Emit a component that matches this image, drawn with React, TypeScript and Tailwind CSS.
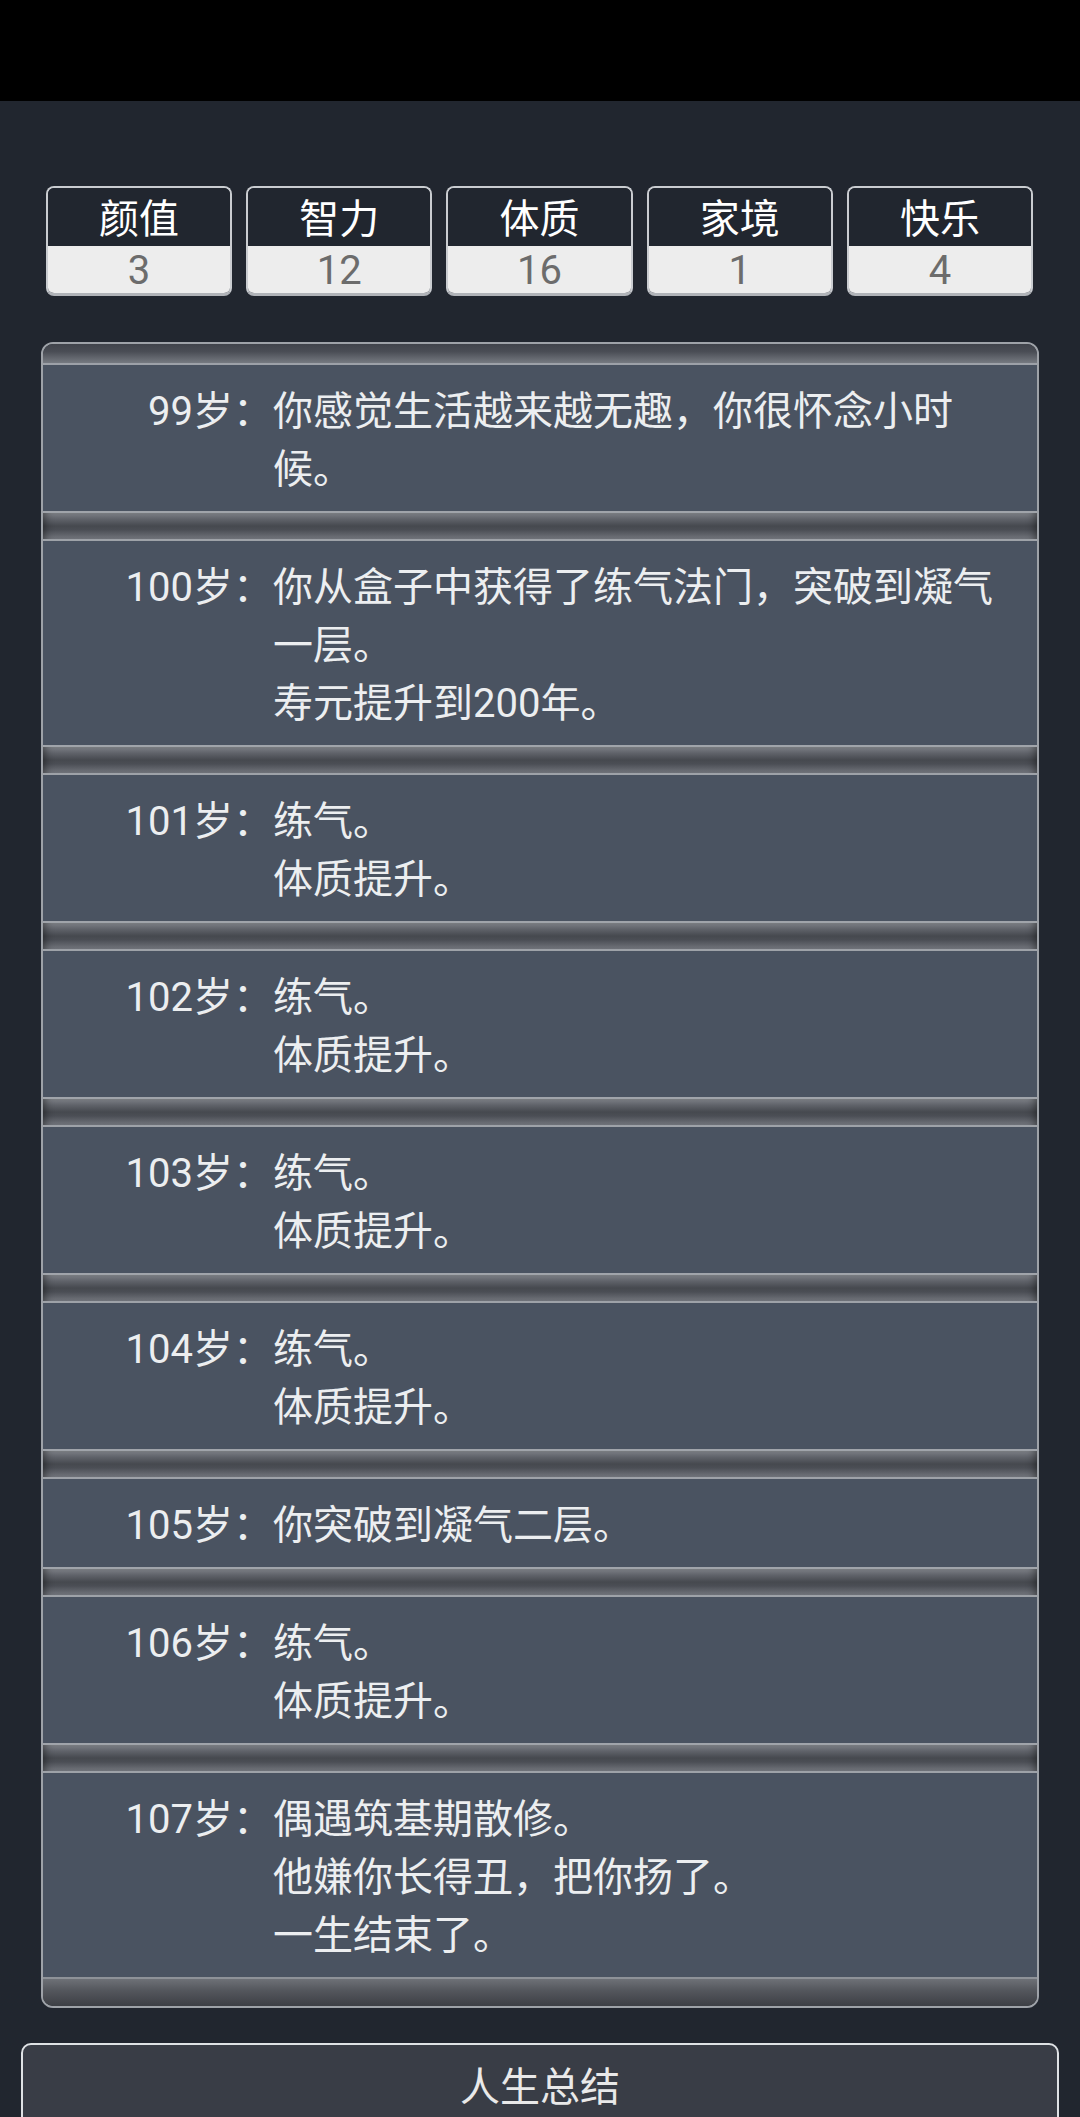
import React from 'react';

type Stat = { name: string; value: number };
type Entry = { age: number; lines: string[] };

const STATS: Stat[] = [
  { name: '颜值', value: 3 },
  { name: '智力', value: 12 },
  { name: '体质', value: 16 },
  { name: '家境', value: 1 },
  { name: '快乐', value: 4 },
];

const ENTRIES: Entry[] = [
  { age: 99, lines: ['你感觉生活越来越无趣，你很怀念小时候。'] },
  { age: 100, lines: ['你从盒子中获得了练气法门，突破到凝气一层。', '寿元提升到200年。'] },
  { age: 101, lines: ['练气。', '体质提升。'] },
  { age: 102, lines: ['练气。', '体质提升。'] },
  { age: 103, lines: ['练气。', '体质提升。'] },
  { age: 104, lines: ['练气。', '体质提升。'] },
  { age: 105, lines: ['你突破到凝气二层。'] },
  { age: 106, lines: ['练气。', '体质提升。'] },
  { age: 107, lines: ['偶遇筑基期散修。', '他嫌你长得丑，把你扬了。', '一生结束了。'] },
];

// groove between two entries
const Separator = () => (
  <div className="h-[30px] border-y-2 border-t-[#a0a4aa] border-b-[#9ea2a8] bg-[linear-gradient(to_bottom,#7c7f85_0%,#5e6168_25%,#46494f_50%,#4b4e55_65%,#72757c_100%)] shadow-[inset_10px_0_8px_-8px_rgba(0,0,0,0.45),inset_-10px_0_8px_-8px_rgba(0,0,0,0.45)]" />
);

const StatBox = ({ stat }: { stat: Stat }) => (
  <div className="flex flex-col overflow-hidden rounded-[8px] border-x-2 border-t-2 border-b-[3px] border-[#c9ccd0] border-b-[#b0b3b8]">
    <div className="flex h-[58px] items-center justify-center bg-[#21262f] pt-[5px] text-[40px] leading-none text-white">
      {stat.name}
    </div>
    <div className="flex h-[47px] items-center justify-center bg-[#ededed] pt-[2px] text-[40px] leading-none text-[#6c6c6c]">
      {stat.value}
    </div>
  </div>
);

const EntryRow = ({ entry }: { entry: Entry }) => (
  <div className="flex bg-[#4a5361] pt-[18px] pb-[12px] pr-[30px] text-[40px] leading-[58px] text-[#eceef0]">
    <div className="w-[230px] shrink-0 text-right">{entry.age}岁：</div>
    <div className="flex-1">
      {entry.lines.map((l, i) => (
        <div key={i}>{l}</div>
      ))}
    </div>
  </div>
);

export default function App() {
  return (
    <div
      className="h-[2117px] w-[1080px] overflow-hidden bg-[#21262f]"
      style={{ fontFamily: "Roboto, 'Noto Sans CJK SC', sans-serif" }}
    >
      {/* status bar */}
      <div className="h-[101px] bg-black" />

      {/* attributes */}
      <div className="mt-[85px] grid grid-cols-5 gap-[14px] pl-[46px] pr-[47px]">
        {STATS.map((s) => (
          <StatBox key={s.name} stat={s} />
        ))}
      </div>

      {/* life log */}
      <div className="mx-[41px] mt-[46px] h-[1666px] w-[998px] overflow-hidden rounded-[12px] border-2 border-[#9ea2a8]">
        <div className="h-[21px] border-b-2 border-[#9da1a8] bg-[linear-gradient(to_bottom,#40434b_0%,#4a4d55_40%,#767a81_100%)]" />
        {ENTRIES.map((e, i) => (
          <React.Fragment key={e.age}>
            {i > 0 && <Separator />}
            <EntryRow entry={e} />
          </React.Fragment>
        ))}
        <div className="h-[29px] border-t-2 border-[#8e9298] bg-[linear-gradient(to_bottom,#6e7177_0%,#55585e_40%,#3d3f45_100%)]" />
      </div>

      {/* summary button */}
      <div className="mx-[21px] mt-[35px] flex h-[86px] items-center justify-center rounded-[10px] border-2 border-[#dfe2e5] bg-[#393d46] pt-[4px] text-[40px] text-[#e9e9e9]">
        人生总结
      </div>
    </div>
  );
}
